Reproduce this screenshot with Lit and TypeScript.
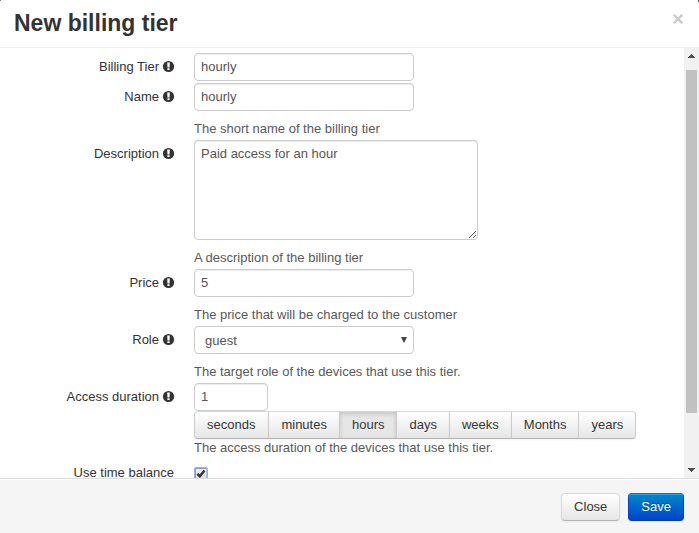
import { LitElement, html, css, svg } from "lit";
import { customElement, property, state } from "lit/decorators.js";
import { classMap } from "lit/directives/class-map.js";

const infoIcon = html`<svg class="info" width="11" height="11" viewBox="0 0 11 11">
  ${svg`<circle cx="5.5" cy="5.5" r="5.6" fill="#333"/><path d="M4.2 1.6h2.6l-.25 4.9h-2.1zM4.4 7.3h2.2v1.8h-2.2z" fill="#fff"/>`}
</svg>`;

@customElement("form-row")
class FormRow extends LitElement {
  @property() label = "";
  @property() help = "";
  @property({ type: Boolean }) info = false;
  @property({ type: Boolean }) tight = false;

  static styles = css`
    :host { display: flex; margin-bottom: 2px; }
    .label { width: 174px; flex: none; padding-top: 5px; text-align: right; box-sizing: border-box; white-space: nowrap; }
    .info { vertical-align: -1px; margin-left: 4px; display: inline-block; overflow: visible; }
    .controls { margin-left: 20px; flex: 1; min-width: 0; display: flex; flex-direction: column; align-items: flex-start; }
    .help { color: #595959; margin-top: 9px; white-space: nowrap; }
    .help.tight { margin-top: 0; }
  `;

  render() {
    return html`<div class="label">${this.label}${this.info ? infoIcon : ""}</div>
      <div class="controls">
        <slot></slot>
        ${this.help ? html`<div class=${classMap({ help: true, tight: this.tight })}>${this.help}</div>` : ""}
      </div>`;
  }
}

@customElement("app-root")
class AppRoot extends LitElement {
  @state() unit = "hours";
  private units = ["seconds", "minutes", "hours", "days", "weeks", "Months", "years"];

  static styles = css`
    :host { display: flex; flex-direction: column; position: relative; height: 533px; width: 699px; overflow: hidden; background: #fff;
      font: 13px/18px "Liberation Sans", Arial, sans-serif; color: #333; }
    .corner { position: absolute; top: 0; width: 1px; height: 1px; background: #777; }
    .corner.left { left: 0; }
    .corner.right { right: 0; height: 2px; background: #555; }
    .header { height: 47px; flex: none; display: flex; justify-content: space-between; padding: 0 15px 0 14px; border-bottom: 1px solid #eee; }
    .title { margin: 0; font-size: 23px; line-height: 30px; padding-top: 8px; font-weight: bold; }
    .dismiss { margin: 10px 0 0; width: 12px; height: 18px; display: flex; align-items: center; justify-content: center; }
    .body { height: 430px; flex: none; display: flex; overflow: hidden; }
    .form { flex: 1; min-width: 0; padding-top: 5px; overflow: hidden; }
    .field { display: block; box-sizing: border-box; margin: 0; width: 220px; height: 28px; padding: 3px 6px 5px; border: 1px solid #ccc; border-radius: 4px;
      background: #fff; box-shadow: inset 0 1px 1px rgba(0,0,0,.075); font: inherit; color: #555; outline: none; }
    .field.short { width: 74px; }
    .area { position: relative; }
    .field.text { width: 284px; height: 100px; padding: 4px 6px; resize: none; overflow: hidden; }
    .grip { position: absolute; right: 1px; bottom: 1px; }
    .field.select { display: flex; align-items: center; justify-content: space-between; padding: 1px 6px 0 10px; box-shadow: none; }
    .select svg { margin-top: -2px; }
    .group { display: flex; }
    .btn { box-sizing: border-box; height: 28px; padding: 4px 12px; border: 1px solid; border-color: #d9d9d9 #d9d9d9 #b3b3b3; border-radius: 4px;
      background: linear-gradient(#fff, #e6e6e6); color: #333; font: inherit; text-shadow: 0 1px 1px rgba(255,255,255,.75);
      box-shadow: inset 0 1px 0 rgba(255,255,255,.2), 0 1px 2px rgba(0,0,0,.05); }
    .group .btn { border-radius: 0; margin-left: -1px; border-left-color: #ccc; border-right-color: #ccc; }
    .group .btn:first-child { margin-left: 0; padding-right: 13px; border-radius: 4px 0 0 4px; }
    .group .btn:last-child { border-radius: 0 4px 4px 0; }
    .group .btn.active { background: #e6e6e6; box-shadow: inset 0 2px 4px rgba(0,0,0,.15), 0 1px 2px rgba(0,0,0,.05); }
    .check { width: 10px; height: 10px; margin: 9px 0 0 1px; border: 1px solid #8f9fbb; border-right-color: #a9c4f5; background: linear-gradient(#eee, #dcdcdc); outline: 1px solid #8db3f5; border-radius: 1px; display: block; }
    .check svg { display: block; }
    .scroll { width: 15px; flex: none; background: #f1f1f1; display: flex; flex-direction: column; align-items: center; box-sizing: border-box; padding: 6px 0; }
    .scroll svg { display: block; flex: none; }
    .thumb { width: 11px; height: 343px; margin-top: 12px; margin-bottom: auto; background: #c1c1c1; }
    .footer { flex: 1; box-sizing: border-box; display: flex; justify-content: flex-end; gap: 8px; padding: 14px 15px 0 0; border-top: 1px solid #ddd; background: #f5f5f5; box-shadow: inset 0 1px 0 #fff; }
    .btn.primary { color: #fff; background: linear-gradient(#08c, #04c); border-color: #0074cc #04c #003ab0; text-shadow: 0 -1px 0 rgba(0,0,0,.25); }
  `;

  render() {
    return html`
      <div class="header">
        <h3 class="title">New billing tier</h3>
        <div class="dismiss"><svg width="10" height="10" viewBox="0 0 10 10"><path d="M.8 .8L9.2 9.2M9.2 .8L.8 9.2" stroke="#ccc" stroke-width="2.5"/></svg></div>
      </div>
      <div class="body">
        <div class="form">
          <form-row label="Billing Tier" info><input class="field" .value=${"hourly"}></form-row>
          <form-row label="Name" info help="The short name of the billing tier"><input class="field" .value=${"hourly"}></form-row>
          <form-row label="Description" info help="A description of the billing tier">
            <div class="area"><textarea class="field text" .value=${"Paid access for an hour"}></textarea>
              <svg class="grip" width="9" height="9" viewBox="0 0 9 9" shape-rendering="crispEdges"><path d="M1 7h1v1h-1zM2 6h1v1h-1zM3 5h1v1h-1zM4 4h1v1h-1zM5 3h1v1h-1zM6 2h1v1h-1zM7 1h1v1h-1zM5 7h1v1h-1zM6 6h1v1h-1zM7 5h1v1h-1z" fill="#555"/></svg>
            </div>
          </form-row>
          <form-row label="Price" info help="The price that will be charged to the customer"><input class="field" .value=${"5"}></form-row>
          <form-row label="Role" info help="The target role of the devices that use this tier.">
            <div class="field select"><span>guest</span><svg width="6" height="6" viewBox="0 0 6 6"><path d="M0 0H6L3.2 5.8H2.8z" fill="#444"/></svg></div>
          </form-row>
          <form-row label="Access duration" info tight help="The access duration of the devices that use this tier.">
            <input class="field short" .value=${"1"}>
            <div class="group">${this.units.map(u => html`<button class=${classMap({ btn: true, active: u === this.unit })} @click=${() => (this.unit = u)}>${u}</button>`)}</div>
          </form-row>
          <form-row label="Use time balance">
            <span class="check"><svg width="10" height="10" viewBox="0 0 10 10"><path d="M1.3 4.8L3.8 7.3L8.5 1.4" fill="none" stroke="#333" stroke-width="2.4"/></svg></span>
          </form-row>
        </div>
        <div class="scroll">
          <svg width="7" height="4" viewBox="0 0 7 4" shape-rendering="crispEdges"><path d="M3 0h1v1h1v1h1v1h1v1H0v-1h1v-1h1v-1h1z" fill="#505050"/></svg>
          <div class="thumb"></div>
          <svg width="7" height="4" viewBox="0 0 7 4" shape-rendering="crispEdges"><path d="M0 0h7v1h-1v1h-1v1h-1v1h-1v-1h-1v-1h-1v-1h-1z" fill="#505050"/></svg>
        </div>
      </div>
      <div class="footer"><button class="btn">Close</button><button class="btn primary">Save</button></div>
      <span class="corner left"></span><span class="corner right"></span>`;
  }
}
